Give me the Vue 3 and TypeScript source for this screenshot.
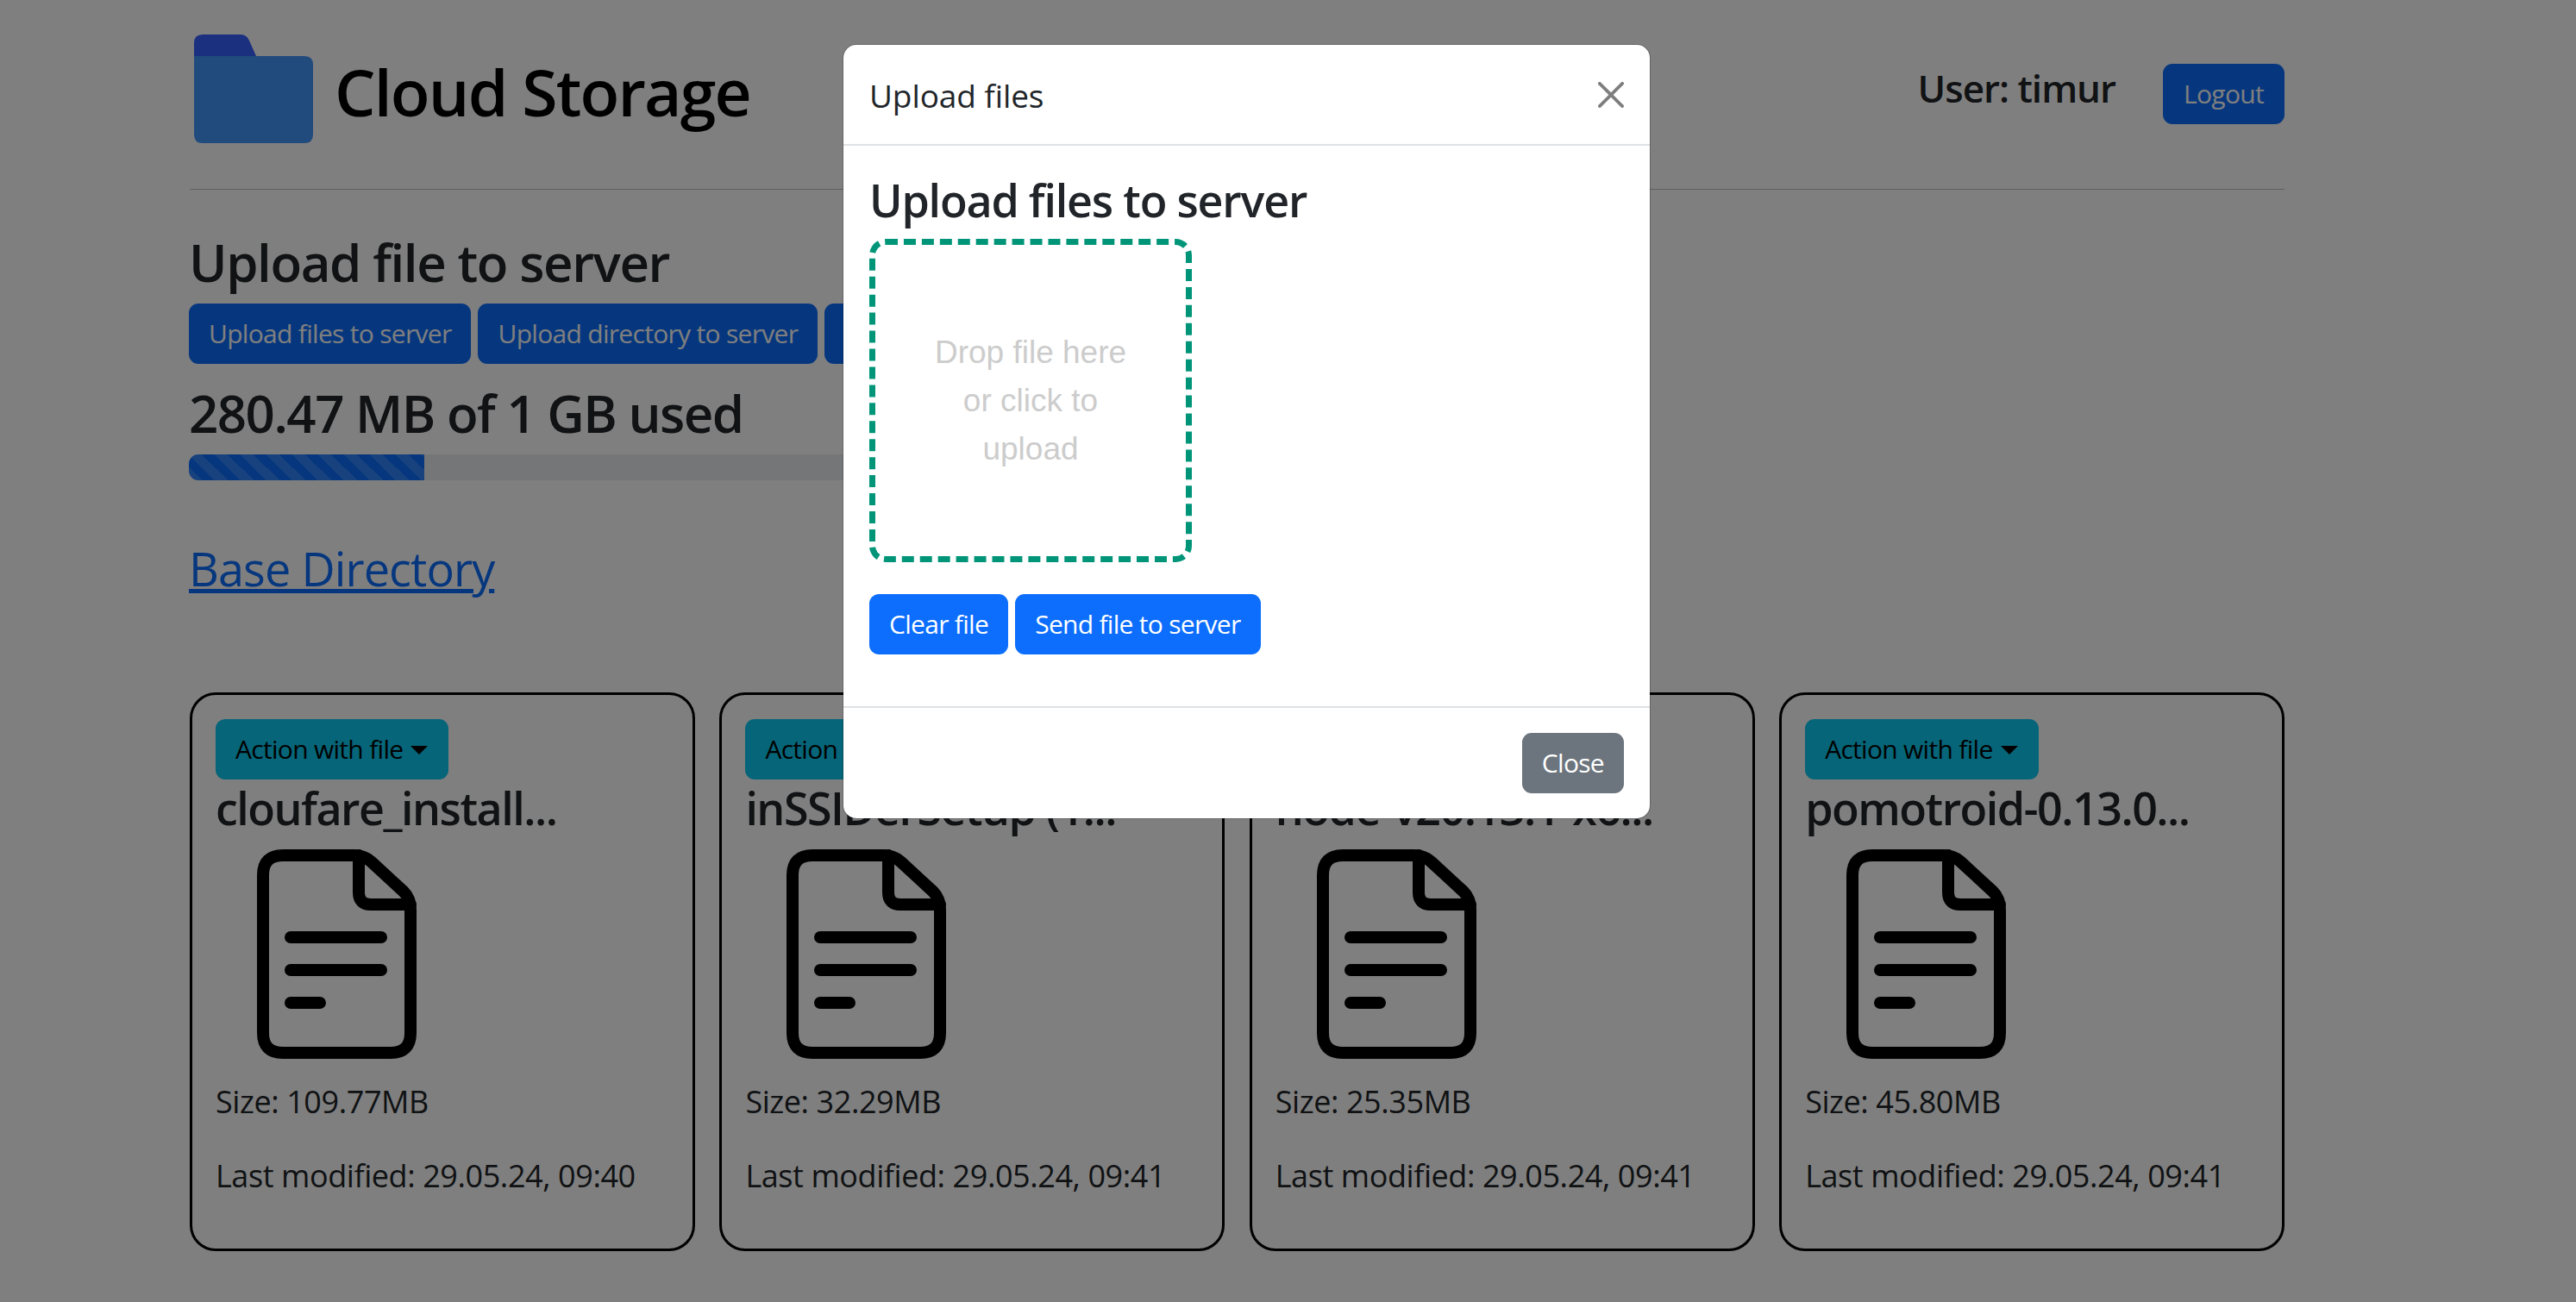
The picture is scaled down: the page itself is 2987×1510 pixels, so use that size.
<template>
  <div class="page">
    <header class="top">
      <div class="brand">
        <svg class="folder" viewBox="0 0 138 126" width="138" height="126">
          <path d="M0 25V10Q0 0 10 0H54Q61 0 64 7L72 25Z" fill="#3660ff" />
          <path d="M0 25H128Q138 25 138 35V116Q138 126 128 126H10Q0 126 0 116Z" fill="#4294fa" />
        </svg>
        <h1>Cloud Storage</h1>
      </div>
      <div class="user">
        <h4>User: timur</h4>
        <button class="btn primary">Logout</button>
      </div>
    </header>

    <div class="upload">
      <h2 class="upload-title">Upload file to server</h2>
      <div class="upload-btns">
        <button class="btn primary">Upload files to server</button>
        <button class="btn primary">Upload directory to server</button>
        <button class="btn primary third"></button>
      </div>
      <h3 class="used">280.47 MB of 1 GB used</h3>
      <div class="progress">
        <div class="bar" :style="{ width: usedPercent + '%' }"></div>
      </div>
      <a class="base" href="#">Base Directory</a>
    </div>

    <div class="cards">
      <div v-for="f in files" :key="f.name" class="card">
        <button class="btn info">Action with file<span class="caret"></span></button>
        <h3 class="name">{{ f.name }}</h3>
        <svg class="doc" viewBox="0 0 185 243" width="185" height="243" fill="none" stroke="#000" stroke-width="14" stroke-linecap="round" stroke-linejoin="round">
          <path d="M30 7H113Q124 7 132 14L170 49Q178 57 178 70V213Q178 236 155 236H30Q7 236 7 213V30Q7 7 30 7Z" />
          <path d="M118 7V50Q118 64 132 64H178" />
          <path d="M39 102H144M39 140H144M39 178H73" />
        </svg>
        <p class="size">Size: {{ f.size }}</p>
        <p class="date">Last modified: {{ f.date }}</p>
      </div>
    </div>

    <div class="backdrop"></div>
    <div class="modal">
      <div class="modal-head">
        <span class="modal-title">Upload files</span>
        <svg class="close-x" viewBox="0 0 16 16" width="30" height="30">
          <path d="M.293.293a1 1 0 0 1 1.414 0L8 6.586 14.293.293a1 1 0 1 1 1.414 1.414L9.414 8l6.293 6.293a1 1 0 0 1-1.414 1.414L8 9.414l-6.293 6.293a1 1 0 0 1-1.414-1.414L6.586 8 .293 1.707a1 1 0 0 1 0-1.414z" />
        </svg>
      </div>
      <div class="modal-body">
        <h3 class="modal-h">Upload files to server</h3>
        <div class="drop">Drop file here or click to upload</div>
        <div class="modal-btns">
          <button class="btn solid">Clear file</button>
          <button class="btn solid">Send file to server</button>
        </div>
      </div>
      <div class="modal-foot">
        <button class="btn grey">Close</button>
      </div>
    </div>
  </div>
</template>

<script setup lang="ts">
const usedPercent = 27.39;

const files = [
  { name: 'cloufare_install...', size: '109.77MB', date: '29.05.24, 09:40' },
  { name: 'inSSIDerSetup (1...', size: '32.29MB', date: '29.05.24, 09:41' },
  { name: 'node-v20.13.1-x6...', size: '25.35MB', date: '29.05.24, 09:41' },
  { name: 'pomotroid-0.13.0...', size: '45.80MB', date: '29.05.24, 09:41' }
];
</script>

<style>
html, body {
  margin: 0;
  background: #fff;
}
</style>

<style scoped>
.page {
  position: relative;
  width: 2987px;
  height: 1510px;
  box-sizing: border-box;
  padding: 40px 338px 0 220px;
  overflow: hidden;
  font-family: "Open Sans", "Noto Sans", sans-serif;
  font-size: 30px;
  color: #212529;
}

h1, h2, h3, h4, p {
  margin: 0;
}

.top {
  display: flex;
  justify-content: space-between;
  height: 179px;
  border-bottom: 1px solid rgba(0, 0, 0, 0.25);
}

.brand {
  display: flex;
  align-items: flex-start;
  gap: 25px;
  padding-left: 5px;
}

.folder {
  display: block;
}

h1 {
  font-size: 75px;
  font-weight: 560;
  line-height: 96px;
  color: #000;
  letter-spacing: -1.8px;
  margin-top: 18px;
}

.user {
  display: flex;
  align-items: flex-start;
  gap: 55px;
  padding-top: 34px;
}

.user h4 {
  font-size: 44px;
  font-weight: 560;
  line-height: 60px;
  letter-spacing: -1px;
  margin-top: -2px;
}

.btn {
  height: 70px;
  box-sizing: border-box;
  padding: 0 23px 2px;
  border: none;
  border-radius: 11px;
  font-family: inherit;
  font-size: 30px;
  letter-spacing: -0.7px;
  white-space: nowrap;
}

.user .btn {
  padding: 0 24px 2px;
}

.third {
  width: 300px;
  flex: none;
}

.primary,
.solid {
  background: #0d6efd;
  color: #fff;
}

.info {
  background: #0dcaf0;
  color: #000;
}

.grey {
  background: #6c757d;
  color: #fff;
}

.upload {
  margin-left: -1px;
}

.upload-title {
  font-size: 60px;
  font-weight: 560;
  line-height: 80px;
  letter-spacing: -1.4px;
  margin-top: 44px;
}

.upload-btns {
  display: flex;
  gap: 8px;
  margin-top: 8px;
}

.used {
  font-size: 60px;
  font-weight: 560;
  line-height: 72px;
  letter-spacing: -1.5px;
  margin-top: 21px;
}

.progress {
  width: 996px;
  height: 30px;
  border-radius: 11px;
  background: #e9ecef;
  overflow: hidden;
  margin-top: 12px;
}

.bar {
  height: 100%;
  background-color: #0d6efd;
  background-image: linear-gradient(45deg, rgba(255, 255, 255, 0.15) 25%, transparent 25%, transparent 50%, rgba(255, 255, 255, 0.15) 50%, rgba(255, 255, 255, 0.15) 75%, transparent 75%, transparent);
  background-size: 30px 30px;
}

.base {
  display: inline-block;
  font-size: 54px;
  line-height: 80px;
  letter-spacing: -0.9px;
  color: #0d6efd;
  margin-top: 62px;
}

.cards {
  display: flex;
  gap: 28.5px;
  margin-top: 104px;
}

.card {
  width: 586px;
  height: 648px;
  box-sizing: border-box;
  padding: 28px 27px 0;
  border: 3px solid #000;
  border-radius: 30px;
}

.name {
  font-size: 52px;
  font-weight: 560;
  line-height: 70px;
  letter-spacing: -1.5px;
  white-space: nowrap;
  margin-top: -2px;
}

.doc {
  display: block;
  margin: 13px 0 0 48px;
}

.size {
  margin-top: 28px;
}

.date {
  margin-top: 42px;
}

.size,
.date {
  font-size: 36px;
  line-height: 44px;
  letter-spacing: -0.42px;
}

.caret {
  display: inline-block;
  margin-left: 9px;
  margin-right: 1px;
  vertical-align: 5px;
  border-top: 10px solid #000;
  border-left: 10px solid transparent;
  border-right: 10px solid transparent;
}

.backdrop {
  position: absolute;
  inset: 0;
  background: rgba(0, 0, 0, 0.5);
}

.modal {
  position: absolute;
  left: 978px;
  top: 52px;
  width: 935px;
  height: 897px;
  display: flex;
  flex-direction: column;
  background: #fff;
  border-radius: 15px;
  box-shadow: 0 0 0 1px rgba(0, 0, 0, 0.2);
}

.modal-head {
  display: flex;
  align-items: center;
  justify-content: space-between;
  height: 117px;
  box-sizing: border-box;
  padding: 0 30px;
  border-bottom: 2px solid #dee2e6;
}

.modal-title {
  font-size: 37px;
  font-weight: 500;
  letter-spacing: -0.1px;
  margin-top: 2px;
  color: #212529;
}

.close-x {
  opacity: 0.5;
}

.modal-body {
  flex: 1;
  padding: 28px 30px 0;
}

.modal-h {
  font-size: 52px;
  font-weight: 560;
  line-height: 70px;
  letter-spacing: -1.2px;
}

.drop {
  width: 374px;
  height: 375px;
  box-sizing: border-box;
  margin-top: 10px;
  padding: 0 59px;
  display: flex;
  align-items: center;
  text-align: center;
  border: 7px dashed #009578;
  border-radius: 19px;
  font-family: "Liberation Sans", sans-serif;
  font-size: 37px;
  line-height: 56px;
  color: #ccc;
}

.modal-btns {
  display: flex;
  gap: 8px;
  margin-top: 37px;
}

.modal-foot {
  display: flex;
  justify-content: flex-end;
  align-items: center;
  height: 130px;
  box-sizing: border-box;
  padding: 0 30px;
  border-top: 2px solid #dee2e6;
}
</style>
